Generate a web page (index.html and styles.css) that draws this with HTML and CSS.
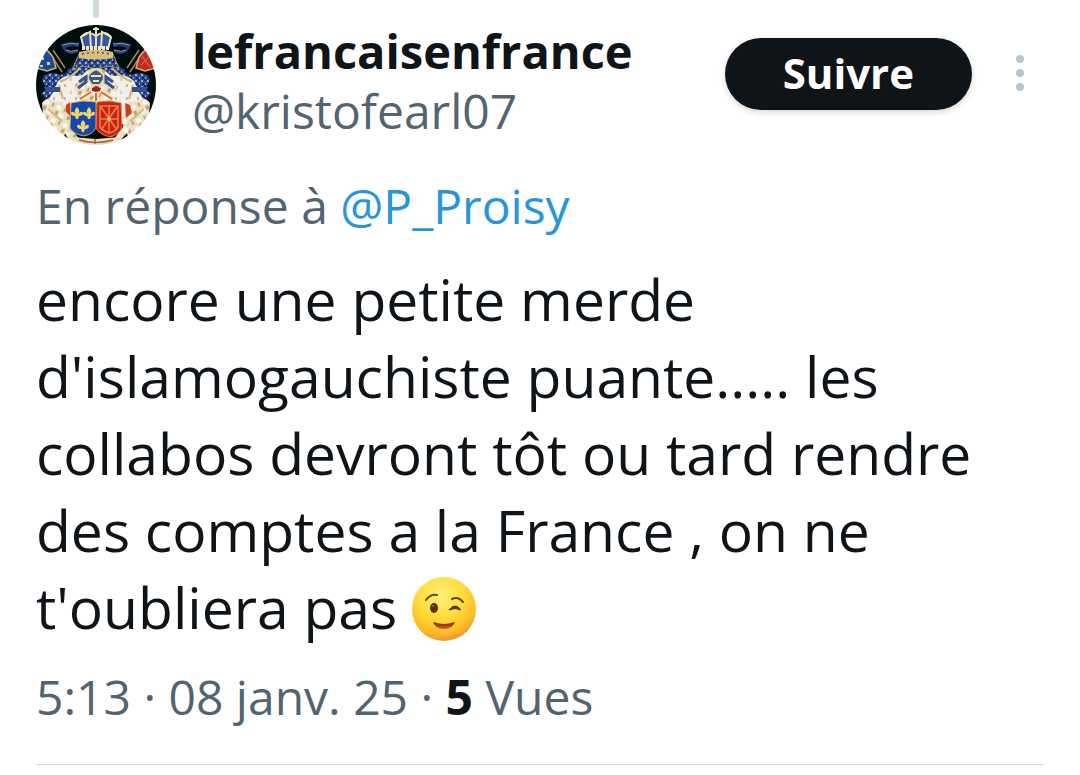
FILE: index.html
```html
<!DOCTYPE html>
<html lang="fr">
<head>
<meta charset="utf-8">
<meta name="viewport" content="width=device-width, initial-scale=1">
<title>lefrancaisenfrance</title>
<link rel="stylesheet" href="styles.css">
</head>
<body>
<article class="post">
  <header class="post-header">
    <div class="avatar-column">
      <span class="thread-line"></span>
      <svg class="avatar" viewBox="0 0 120 120" role="img" aria-label="Photo de profil">
        <defs>
          <clipPath id="disc"><circle cx="60" cy="60" r="60"/></clipPath>
          <filter id="soft"><feGaussianBlur stdDeviation=".7"/></filter>
          <pattern id="lys" width="6" height="6" patternUnits="userSpaceOnUse"><rect width="6" height="6" fill="#2c4f97"/><path d="M1 1h2v2H1zM4 4h1v2H4z" fill="#a9abb0"/><path d="M4 0h2v2H4zM0 4h2v2H0z" fill="#122a62"/></pattern>
          <pattern id="ermine" width="11" height="13" patternUnits="userSpaceOnUse"><rect width="11" height="13" fill="#f3efe8"/><path d="M1 1h2v3H1z" fill="#ddd0b5"/><path d="M6 7h2v3H6z" fill="#c5bba8"/></pattern>
          <pattern id="gilt" width="13" height="14" patternUnits="userSpaceOnUse" patternTransform="rotate(24)"><rect width="13" height="14" fill="#ebdfc3"/><path d="M1 0h3v4H1zM8 8h2v4H8z" fill="#c6a36c"/><path d="M5 1h5v5H5zM0 8h5v4H0z" fill="#fbf6ea"/></pattern>
          <g id="fleur"><path d="M0-6Q4-2 1 1Q5-3 6 0Q6 3 2 3L1 6h-2L-2 3Q-6 3-6 0Q-5-3-1 1Q-4-2 0-6z" fill="#f2d760"/></g>
          <g id="side">
            <path d="M25 20q7-4 18-2v4q-9-2-14 1 5 5 13 1v3q-12 6-17-7z" fill="#293d70"/>
            <path d="M26 20q8-3 17-1M30 25q5 3 12 0" fill="none" stroke="#8696b9" stroke-width="1"/>
            <path d="M6 54q3-7 12-6l9 2 8-8 7-7 18 4v22l-34 8-12 8-9-8 5-5z" fill="url(#lys)"/>
            <path d="M22 56q8-7 18-5l18-2v50H32L14 90l-4-12 8-12z" fill="url(#ermine)"/>
            <path d="M6 78q6-8 12-2l9 2 6 14-5 20-20-12z" fill="url(#gilt)"/>
            <path d="M17 25l12 18M13 27l13 20" stroke="#a9875a" stroke-width="1.5"/>
            <path d="M24 57q12-5 20-14M23 60l4 14M12 84l14 12" fill="none" stroke="#d1b57c" stroke-width="2"/>
            <path d="M8 62h16v5H10z" fill="#2d4f91"/>
          </g>
        </defs>
        <g clip-path="url(#disc)"><g filter="url(#soft)">
          <rect width="120" height="120" fill="#05070b"/>
          <use href="#side"/>
          <use href="#side" transform="translate(120 0) scale(-1 1)"/>
          <path d="M0 29l11-4 6 7 3 11-9 3-11-3z" fill="#174b9c" stroke="#d5b268" stroke-width="1.5"/>
          <path d="M5 32h3v3H5zM11 37h3v3h-3zM4 40h3v2H4z" fill="#dfcb75"/>
          <path d="M120 29l-11-4-6 7-3 11 9 3 11-3z" fill="#c42a20" stroke="#d5b268" stroke-width="1.5"/>
          <path d="M106 31l8 11m0-11l-9 9" stroke="#e2784e" stroke-width="1"/>
          <path d="M43 29h34l6 14-10-2-13 3-13-3-11 4z" fill="url(#lys)" stroke="#a98b55" stroke-width="1"/>
          <path d="M43 27q17-5 34 0v6q-17 3-34 0z" fill="#d9c17c"/>
          <path d="M46 29q14-3 28 0" stroke="#7b5a52" stroke-width="2" fill="none" stroke-dasharray="2 3"/>
          <path d="M47 24l-2-12q8-6 15-1 7-5 15 1l-2 12z" fill="#3455a0"/>
          <path d="M48 24l-3-12 9-5 1 17M72 24l3-12-9-5-1 17M60 2v22M45 12q7-8 15-1 8-7 15 1M57 4h6" fill="none" stroke="#eee1b2" stroke-width="2"/>
          <path d="M46 23h28" stroke="#eee6c6" stroke-width="4" stroke-dasharray="3 1"/>
          <path d="M44 53q6-10 16-10t16 10l6 9-8 17H45l-7-17z" fill="url(#gilt)"/>
          <path d="M52 54q-1-6 8-10 9 4 8 10l-4 6h-8z" fill="#3a568f" stroke="#ead491" stroke-width="2"/>
          <path d="M55 51h10M57 56h6" stroke="#f4e6b7" stroke-width="2"/>
          <path d="M43 57l7-5v5l-8 6M77 57l-7-5v5l8 6" fill="none" stroke="#345391" stroke-width="3"/>
          <path d="M56 63l4-2 5 2-1 3-4 1-4-1z" fill="#a91e18"/>
          <path d="M44 74l11-7M76 74l-11-7M60 68v8" stroke="#c9752f" stroke-width="2"/>
          <path d="M27 82l6-6 3 8-2 17 9 13 17 6 18-6 9-12 1-18 5 7v15l-13 14H36l-9-15z" fill="url(#gilt)"/>
          <path d="M30 80l4-3v14l-4-4zM89 78l5 2 2 8-6 5z" fill="#cd3e23"/>
          <path d="M35 78l12-2 13 1v25q-2 7-12 9-11-2-14-8z" fill="#1746ad" stroke="#c6a862" stroke-width="1"/>
          <path d="M61 77l12-1 12 2 1 24q-3 8-12 10-12-3-14-9z" fill="#cc2117" stroke="#c69145" stroke-width="1"/>
          <use href="#fleur" x="41" y="88"/><use href="#fleur" x="53" y="88"/><use href="#fleur" x="47" y="101"/>
          <path d="M64 81h18v21q-3 5-9 6-6-2-9-6zM73 80v27M64 94h18M65 82l16 23M81 82l-16 23" fill="none" stroke="#ec8048" stroke-width="1.5"/>
          <circle cx="73" cy="94" r="2" fill="#f3c465"/>
          <path d="M36 112l24 2 24-2v8H36z" fill="#e9dcbf"/>
          <path d="M43 115q17 5 34 0M59 119v-5" fill="none" stroke="#a86338" stroke-width="1.5"/>
        </g></g>
      </svg>
    </div>
    <div class="author">
      <strong class="name">lefrancaisenfrance</strong>
      <span class="handle">@kristofearl07</span>
    </div>
    <button class="follow" type="button">Suivre</button>
    <button class="more" type="button" aria-label="Plus d’options">
      <svg class="more-icon" viewBox="0 0 8 38" aria-hidden="true"><circle cx="4" cy="5" r="4"/><circle cx="4" cy="19" r="4"/><circle cx="4" cy="33" r="4"/></svg>
    </button>
  </header>
  <p class="reply">En réponse à <a class="mention" href="#">@P_Proisy</a></p>
  <p class="message">encore une petite merde d'islamogauchiste puante..... les collabos devront tôt ou tard rendre des comptes a la France , on ne t'oubliera pas <svg class="emoji" viewBox="0 0 64 64" role="img" aria-label="Clin d’œil">
    <defs>
      <radialGradient id="face" cx="45%" cy="28%" r="72%"><stop offset="0" stop-color="#fff176"/><stop offset=".5" stop-color="#ffdc3c"/><stop offset=".82" stop-color="#fdbd24"/><stop offset="1" stop-color="#ed9730"/></radialGradient>
      <linearGradient id="mouth" x2="0" y2="1"><stop stop-color="#6d2f16"/><stop offset=".55" stop-color="#a9431c"/><stop offset="1" stop-color="#f05a35"/></linearGradient>
    </defs>
    <circle cx="32" cy="32" r="32" fill="url(#face)"/>
    <path d="M14 23q4-6 11-5M40 22q6-3 11 3" fill="none" stroke="#70440e" stroke-width="2" stroke-linecap="round"/>
    <ellipse cx="22" cy="31" rx="4" ry="5" fill="#5a300d"/><circle cx="21" cy="29" r="1" fill="#a37343"/>
    <path d="M37 33q6-8 12 0-6-3-12 0z" fill="#5a300d" stroke="#5a300d" stroke-width="1" stroke-linejoin="round"/>
    <path d="M22 45q10 4 20 0 1 0 0 2-3 5-10 5t-10-5q-1-2 0-2z" fill="url(#mouth)"/>
  </svg></p>
  <p class="meta"><time datetime="2025-01-08T05:13">5:13 · 08 janv. 25</time> · <strong class="count">5</strong> Vues</p>
</article>
</body>
</html>
```
FILE: styles.css
```css
* { box-sizing: border-box; }

body {
  margin: 0;
  background: #fff;
  color: #0f1419;
  font-family: "Open Sans", "Noto Sans", sans-serif;
}

.post {
  margin: 0 36px;
  border-bottom: 1px solid #d5d8da;
}

.post-header {
  display: flex;
  align-items: flex-start;
}

.avatar-column {
  display: flex;
  flex: none;
  flex-direction: column;
  align-items: center;
  gap: 7px;
  margin-right: 36px;
}

.thread-line {
  width: 6px;
  height: 18px;
  border-radius: 0 0 3px 3px;
  background: #cfd9de;
}

.avatar {
  display: block;
  width: 120px;
  height: 120px;
}

.author {
  display: flex;
  flex: 1;
  flex-direction: column;
  min-width: 0;
  padding-top: 21px;
  line-height: 60px;
}

.name { font-size: 47px; font-weight: 700; }

.handle { color: #536471; font-size: 48px; }

.follow {
  flex: none;
  margin-top: 38px;
  padding: 0 58px 2px;
  border: 0;
  border-radius: 36px;
  background: #0f1419;
  box-shadow: 0 2px 6px #0000002e;
  color: #fff;
  font: 700 42px/70px "Open Sans", sans-serif;
}

.more {
  flex: none;
  margin: 54px 20px 0 44px;
  padding: 0;
  border: 0;
  background: none;
}

.more-icon {
  display: block;
  width: 8px;
  height: 38px;
  fill: #b9c5cd;
}

.reply,
.meta {
  margin: 0;
  color: #536471;
  font-size: 48px;
  line-height: 60px;
}

.reply { padding-top: 31px; }

.mention { color: #2795d9; text-decoration: none; }

.message {
  margin: 25px 0 0;
  font-size: 57px;
  line-height: 77px;
}

.emoji {
  width: 64px;
  height: 64px;
  margin-top: -16px;
  margin-bottom: -2px;
  vertical-align: -10px;
}

.meta { padding: 21px 0 37px; }

.count { color: #0f1419; }
```
